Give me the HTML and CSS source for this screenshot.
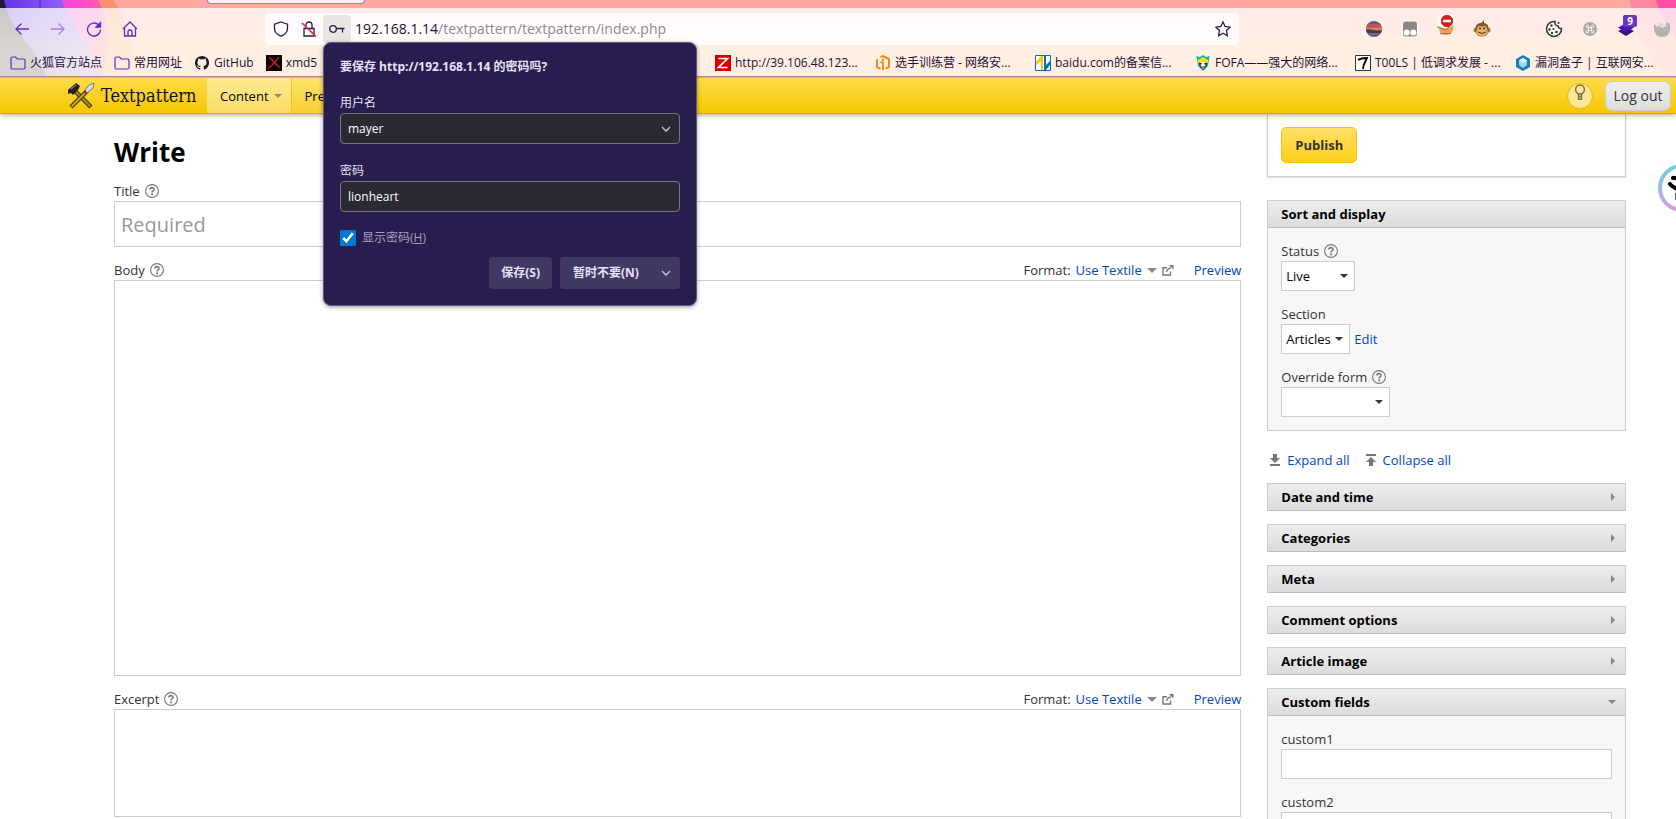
FILE: index.html
```html
<!DOCTYPE html>
<html lang="zh-CN">
<head>
<meta charset="utf-8">
<title>Write - Textpattern</title>
<link rel="stylesheet" href="styles.css">
</head>
<body>
<svg class="defs" aria-hidden="true">
  <symbol id="help" viewBox="0 0 14 14"><circle cx="7" cy="7" r="6.4" fill="none" stroke="#777" stroke-width="1.1"/><path d="M4.9 5.5C4.9 2.9 9.2 3 9.1 5.4 9 6.9 7.1 6.8 7.1 8.4" fill="none" stroke="#777" stroke-width="1.6"/><rect x="6.2" y="9.5" width="1.8" height="1.8" fill="#777"/></symbol>
  <symbol id="external" viewBox="0 0 12 11"><path d="M5 2.7H1V10H8.5V6.5M4.5 7C5 4.500 6.500 3.300 9 3" fill="none" stroke="#777" stroke-width="1.4"/><path d="M7 0H11.500V4.500Z" fill="#777"/></symbol>
  <symbol id="chevron" viewBox="0 0 10 6"><path d="M1 1L5 5L9 1" fill="none" stroke="currentColor" stroke-width="1.3"/></symbol>
  <symbol id="folder" viewBox="0 0 16 16"><path d="M1 12.500V3.500C1 2.500 1.600 2 2.500 2H5.500L7.300 4H13.500C14.400 4 15 4.600 15 5.500V12.500C15 13.400 14.400 14 13.500 14H2.500C1.600 14 1 13.400 1 12.500Z" fill="none" stroke="#5b2fc4" stroke-width="1.200"/></symbol>
</svg>

<div class="browser">
  <svg class="theme" viewBox="0 0 360 77" width="360" height="77" aria-hidden="true">
    <defs>
      <linearGradient id="sky" x1="0" x2="1"><stop offset="0" stop-color="#6032e6"/><stop offset=".6" stop-color="#8a5cf6"/><stop offset="1" stop-color="#b070ff"/></linearGradient>
      <linearGradient id="pink" x1="0" x2="1"><stop offset="0" stop-color="#c05cf4"/><stop offset=".7" stop-color="#ff45d0"/><stop offset="1" stop-color="#ff5fa8"/></linearGradient>
    </defs>
    <path d="M0 0H113C130 25 136 50 130 77H0Z" fill="#ff9070"/>
    <path d="M0 0H98C110 22 112 50 101 77H0Z" fill="url(#pink)"/>
    <path d="M0 0H62C69 25 95 45 100 77H0Z" fill="url(#sky)"/>
    <path d="M0 0H4C12 36 34 42 46 77H0Z" fill="#241438"/>
    <path d="M40 0V8" stroke="#4826a8"/>
  </svg>
  <svg class="theme theme-right" viewBox="0 0 48 77" width="48" height="77" aria-hidden="true">
    <path d="M2 0C6 30 16 58 44 77H48V0Z" fill="#ff86a0"/><path d="M28 0H48V40C38 25 32 15 28 0Z" fill="#ff4fa8"/>
  </svg>
  <div class="tab-strip"><div class="active-tab"></div></div>
  <div class="toolbars">
    <div class="nav-bar">
      <button class="tool" aria-label="后退"><svg viewBox="0 0 16 16"><path d="M15 8H2M7.500 2.500L2 8L7.500 13.500"/></svg></button>
      <button class="tool faded" aria-label="前进"><svg viewBox="0 0 16 16"><path d="M1 8H14M8.500 2.500L14 8L8.500 13.500"/></svg></button>
      <button class="tool" aria-label="刷新"><svg viewBox="0 0 16 16"><path d="M14.500 8.500A6.500 6.500 0 1 1 12.500 3.800"/><path class="solid" d="M14.500 1.500V6H10Z"/></svg></button>
      <button class="tool" aria-label="主页"><svg viewBox="0 0 16 16"><path d="M1 8L8 1L15 8M2.500 7V15H13.500V7M6 15V10.500C6 8.500 10 8.500 10 10.500V15"/></svg></button>
      <div class="url-bar">
        <button class="tool dark" aria-label="跟踪保护"><svg viewBox="0 0 16 16"><path d="M8 1L14.500 3.200V7C14.500 11 11.500 14 8 15.200C4.500 14 1.500 11 1.500 7V3.200Z"/></svg></button>
        <button class="tool dark" aria-label="不安全连接"><svg viewBox="0 0 16 16"><path d="M3 7.500H13V15H3ZM5 7.500V4C5 0 11 0 11 4V7.500"/><path class="slash" d="M1 2L15 15.500"/></svg></button>
        <button class="tool dark key" aria-label="密码"><svg viewBox="0 0 16 16"><circle cx="4" cy="8" r="3.300"/><path d="M7.300 7.500H15.500M13.500 7.500V11.500"/></svg></button>
        <div class="url" role="textbox" aria-label="地址">192.168.1.14<span>/textpattern/textpattern/index.php</span></div>
        <button class="tool dark star" aria-label="收藏"><svg viewBox="0 0 16 16"><path d="M8 1L10.100 5.500L15 6.200L11.500 9.600L12.400 14.700L8 12.300L3.600 14.700L4.500 9.600L1 6.200L5.900 5.500Z"/></svg></button>
      </div>
      <div class="extensions">
        <svg viewBox="0 0 20 20"><circle cx="10" cy="10" r="8" fill="#526083"/><path d="M3.500 5H16.500L17.700 8.500H2.300Z" fill="#b8525b"/><path d="M2 8.500H18V11.500H2Z" fill="#ef7c4d"/><path d="M2 10.500C7 9 12 13 18 11L17 14H3Z" fill="#323d68"/><path d="M5 15H15" stroke="#c95b57"/></svg>
        <svg viewBox="0 0 20 20"><rect x="2.500" y="2" width="15" height="16" rx="3" fill="#8c8886" stroke="#fff"/><circle cx="6.700" cy="13.500" r="3" fill="#fff"/><circle cx="13.300" cy="13.500" r="3" fill="#fff"/></svg>
        <svg class="tall" viewBox="0 0 20 24"><rect x="2" y="0" width="17" height="11" rx="2" fill="#fff"/><path d="M3 11C6 14 14 15 17 9C19 17 14 20 10 20C5 20 3 17 3 11Z" fill="#f6a04c"/><path d="M1 12L10 15L14 11M4 18.500H15" stroke="#8d7864" fill="none"/><circle cx="11" cy="6" r="5.800" fill="#d91e0b" stroke="#5c1a12" stroke-width=".6"/><path d="M7 6H15" stroke="#fff" stroke-width="2.500"/></svg>
        <svg viewBox="0 0 20 20"><circle cx="4" cy="11" r="2.500" fill="#b87431"/><circle cx="16" cy="11" r="2.500" fill="#b87431"/><path d="M9 4L12 1L12 4C17 5 17 9 16.500 13C15 19 5 19 3.500 13C3 8 4 4 9 4Z" fill="#8a5523"/><path d="M5 10C6 6 9 7 10 8C11 7 14 6 15 10L16 14C14 18 6 18 4 14Z" fill="#e3b36e"/><circle cx="8" cy="9.500" r="1" fill="#174b22"/><circle cx="12" cy="9.500" r="1" fill="#174b22"/><path d="M6 13Q10 16 14 13" stroke="#6b2c12" fill="none"/></svg>
        <i></i>
        <svg viewBox="0 0 20 20"><path d="M11 2.500A7.500 7.500 0 1 0 17.500 9.500C15 10 14 8.500 14.300 7C12 7 10.500 5.500 11 2.500Z" fill="#fff" stroke="#333" stroke-width="1.500"/><g fill="#333"><circle cx="7.500" cy="6.500" r="1.200"/><circle cx="5.500" cy="10.500" r="1.200"/><circle cx="9.500" cy="10" r="1.100"/><circle cx="8" cy="14" r="1.200"/><circle cx="12.500" cy="13" r="1.300"/><circle cx="14.500" cy="4" r="1"/></g></svg>
        <svg viewBox="0 0 20 20"><circle cx="10" cy="10" r="7" fill="#aaa"/><path d="M8.500 8.500H11.500V11.500H8.500ZM8.500 8.500H7.300A1.200 1.200 0 1 1 8.500 7.300ZM11.500 8.500V7.300A1.200 1.200 0 1 1 12.700 8.500ZM11.500 11.500H12.700A1.200 1.200 0 1 1 11.500 12.700ZM8.500 11.500V12.700A1.200 1.200 0 1 1 7.300 11.500Z" fill="none" stroke="#fff" stroke-width=".9"/></svg>
        <span class="badged"><svg viewBox="0 0 20 20"><path d="M2 12L10 8L18 12L10 17Z" fill="#301079"/><path d="M2 8.500L10 4.500L18 8.500L10 13.500Z" fill="#5013b3"/></svg><b>9</b></span>
        <svg viewBox="0 0 20 20"><path d="M2 5C4 7 5 8 6 8L8 4L12 6L16 3L18 6C19 15 15 18 10 18C5 18 1 14 2 5Z" fill="#b5b1af"/><path d="M5 4L8 3L9 6L13 4L15 7L10 9Z" fill="#e5e2e0"/></svg>
      </div>
    </div>
    <nav class="bookmarks" aria-label="书签">
      <div class="bookmark-group">
        <a href="#"><svg><use href="#folder"/></svg>火狐官方站点</a>
        <a href="#"><svg><use href="#folder"/></svg>常用网址</a>
        <a href="#"><svg viewBox="0 0 16 16"><path d="M8 1A7 7 0 0 0 5.600 14.600C6 14.700 6.200 14.500 6.200 14.200V12.800C4.200 13.200 3.800 12 3.800 12C3.400 11.200 3 10.900 3 10.900C2.300 10.400 4 10.300 4.600 11.500C5.200 12.300 5.900 12.100 6.300 11.900L6.700 11C4.500 10.800 3.400 9.700 3.400 7.500C3.400 6.700 3.700 6 4.200 5.500C4 5 4 4.300 4.300 3.600C5 3.600 5.700 4 6.300 4.400C7.400 4.100 8.600 4.100 9.700 4.400C10.300 4 11 3.600 11.700 3.600C12 4.300 12 5 11.800 5.500C12.300 6 12.600 6.700 12.600 7.500C12.600 9.700 11.500 10.800 9.300 11C9.700 11.400 9.800 11.900 9.800 12.600V14.200C9.800 14.500 10 14.700 10.400 14.600A7 7 0 0 0 8 1Z" fill="#1d1d24"/></svg>GitHub</a>
        <a href="#"><svg viewBox="0 0 16 16"><path d="M0 0H16V16H0Z" fill="#000"/><path d="M3 2L8 7L14 13M13 2L10 6L6 10L2 14M8 6L11 11M5 4L7 7" stroke="#d4141c" stroke-width="1.300" fill="none"/></svg>xmd5</a>
      </div>
      <div class="bookmark-group sites">
        <a href="#"><svg viewBox="0 0 16 16"><path d="M0 0H16V16H0Z" fill="#d60000"/><path d="M3.500 3.500H12.500L3.500 12.500H12.500" fill="none" stroke="#fff" stroke-width="1.700"/></svg>http://39.106.48.123...</a>
        <a href="#"><svg viewBox="0 0 16 16"><path d="M5.500 2.200L8 1L14 4.200V11.800L10.500 13.800M5.500 13.800L2 11.800V4.200M8 7V15M5.500 7.200H8" fill="none" stroke="#f08a1c" stroke-width="2"/><circle cx="8" cy="4.700" r="1.200" fill="#f08a1c"/></svg>选手训练营 - 网络安...</a>
        <a href="#"><svg viewBox="0 0 16 16"><path d="M.5.5H15.500V15.500H.5Z" fill="#fff" stroke="#0870bd"/><path d="M1 7L6 1H8V15H6V6L1 10Z" fill="#fac800"/><path d="M9 1H11V10L15 6V10L11 15H9Z" fill="#0870bd"/></svg>baidu.com的备案信...</a>
        <a href="#"><svg viewBox="0 0 16 16"><path d="M2 4L1 1L5 2L8 0L11 2L15 1L14 4L13 11L8 16L3 11Z" fill="#16b0a8"/><path d="M3 5L8 2L13 5L13 8H3Z" fill="#f6dc22"/><path d="M4 8H12L11 12L8 15L5 12Z" fill="#333"/><path d="M5.500 7H10.500L10 12L8 14L6 12Z" fill="#fff"/><path d="M4 8L7 9M12 8L9 9M6 12H10" stroke="#222"/></svg>FOFA——强大的网络...</a>
        <a href="#"><svg viewBox="0 0 16 16"><path d="M.5.5H15.500V15.500H.5Z" fill="#fff" stroke="#333"/><path d="M3 5C6 3 8 3 12 3C11 6 8 9 8 14" fill="none" stroke="#000" stroke-width="1.800"/></svg>T00LS | 低调求发展 - ...</a>
        <a href="#"><svg viewBox="0 0 16 16"><path d="M8 0L15 4V12L8 16L1 12V4Z" fill="#1681bd"/><path d="M8 3L12 5.500V10L8 13L4 10V5.500Z" fill="#9cd9f2"/><path d="M4 5.500L8 8L12 5.500L8 3Z" fill="#e8f8ff"/></svg>漏洞盒子 | 互联网安...</a>
      </div>
    </nav>
  </div>

  <section class="doorhanger" aria-label="保存密码">
    <h2>要保存 http://192.168.1.14 的密码吗?</h2>
    <label for="user">用户名</label>
    <div class="field"><input id="user" type="text" value="mayer"><svg class="chev"><use href="#chevron"/></svg></div>
    <label for="pass">密码</label>
    <div class="field"><input id="pass" type="text" value="lionheart"></div>
    <div class="show"><input id="show" type="checkbox" checked><label for="show">显示密码(<u>H</u>)</label></div>
    <div class="actions">
      <button>保存(S)</button>
      <div class="split"><button>暂时不要(N)</button><button class="more" aria-label="更多"><svg class="chev"><use href="#chevron"/></svg></button></div>
    </div>
  </section>
</div>

<header class="txp-header">
  <a class="brand" href="#"><svg viewBox="0 0 28 28"><path d="M9 10L24 25" stroke="#4c3a08" stroke-width="4.500"/><path d="M9 10L23.500 24.500" stroke="#a98d33" stroke-width="2"/><path d="M20 9L4 25" stroke="#4c3a08" stroke-width="4.500"/><path d="M18 11L4.500 24.500" stroke="#c7a640" stroke-width="2"/><path d="M1 8L9 1L13 4L11 8L6 13L4 11L1 12Z" fill="#222"/><path d="M4 7L9 3" stroke="#777" stroke-width="1.500"/><path d="M18 8L22 3L27 1L26 6L20 11Z" fill="#ddd" stroke="#777"/></svg>Textpattern</a>
  <nav class="menu"><a class="current" href="#">Content <i class="caret"></i></a><a href="#">Pre</a></nav>
  <button class="lamp" aria-label="Toggle theme"><svg viewBox="0 0 12 18"><circle cx="6" cy="5.500" r="4.400"/><path d="M4.500 9.800V15.200H7.500V9.800M4.500 12.500H7.500"/></svg></button>
  <button class="logout">Log out</button>
</header>

<main class="page">
  <div class="editor">
    <h1>Write</h1>
    <div class="row"><label for="title">Title</label><svg class="help"><use href="#help"/></svg></div>
    <input class="box title" id="title" type="text" placeholder="Required">
    <div class="row"><label for="body">Body</label><svg class="help"><use href="#help"/></svg>
      <div class="format">Format: <a href="#">Use Textile</a><i class="caret"></i><svg class="external"><use href="#external"/></svg><a class="preview" href="#">Preview</a></div></div>
    <textarea class="box body" id="body"></textarea>
    <div class="row"><label for="excerpt">Excerpt</label><svg class="help"><use href="#help"/></svg>
      <div class="format">Format: <a href="#">Use Textile</a><i class="caret"></i><svg class="external"><use href="#external"/></svg><a class="preview" href="#">Preview</a></div></div>
    <textarea class="box excerpt" id="excerpt"></textarea>
  </div>
  <aside class="side">
    <div class="publish-box"><button class="publish">Publish</button></div>
    <section class="panel sort">
      <h3>Sort and display</h3>
      <div class="panel-body">
        <div class="row"><label for="status">Status</label><svg class="help"><use href="#help"/></svg></div>
        <div class="pick status"><select id="status"><option>Live</option></select></div>
        <div class="row"><label for="section">Section</label></div>
        <div class="inline"><div class="pick section"><select id="section"><option>Articles</option></select></div><a href="#">Edit</a></div>
        <div class="row"><label for="form">Override form</label><svg class="help"><use href="#help"/></svg></div>
        <div class="pick form"><select id="form"><option></option></select></div>
      </div>
    </section>
    <div class="toggles">
      <a href="#"><svg viewBox="0 0 10 12"><path d="M3 0H7V4H10L5 9L0 4H3ZM0 10H10V12H0Z"/></svg>Expand all</a>
      <a href="#"><svg viewBox="0 0 10 12"><path d="M0 0H10V2H0ZM5 3L10 8H7V12H3V8H0Z"/></svg>Collapse all</a>
    </div>
    <section class="panel"><h3>Date and time<i class="closed"></i></h3></section>
    <section class="panel"><h3>Categories<i class="closed"></i></h3></section>
    <section class="panel"><h3>Meta<i class="closed"></i></h3></section>
    <section class="panel"><h3>Comment options<i class="closed"></i></h3></section>
    <section class="panel"><h3>Article image<i class="closed"></i></h3></section>
    <section class="panel"><h3>Custom fields<i class="caret"></i></h3>
      <div class="panel-body">
        <div class="row"><label for="c1">custom1</label></div><input class="box" id="c1" type="text">
        <div class="row"><label for="c2">custom2</label></div><input class="box" id="c2" type="text">
      </div>
    </section>
  </aside>
</main>
<svg class="floater" viewBox="0 0 48 48" aria-hidden="true"><defs><linearGradient id="ring" x1="0" y1="0" x2="0" y2="1"><stop offset=".2" stop-color="#7ec8de"/><stop offset=".65" stop-color="#a9b4ea"/><stop offset="1" stop-color="#dc9ad8"/></linearGradient></defs><circle cx="24" cy="24" r="22" fill="#fff" stroke="url(#ring)" stroke-width="4"/><path d="M15 14C18 13 20 16 26 18M12 20C14 23 18 24 24 28" stroke="#000" stroke-width="4" stroke-linecap="round" fill="none"/><path d="M17.500 29V36" stroke="#555"/></svg>
</body>
</html>
```
FILE: styles.css
```css
* { box-sizing: border-box; }
body {
  margin: 0;
  height: 100vh;
  display: flex;
  flex-direction: column;
  overflow: hidden;
  position: relative;
  background: #fff;
  color: #333;
  font: 13px/20px "Open Sans", "Noto Sans CJK SC", sans-serif;
}
button, input, select, textarea { font: inherit; color: inherit; margin: 0; }
button { padding: 0; border: 0; background: none; }
a { color: #04c; text-decoration: none; }
h1, h2, h3 { margin: 0; }
.defs { position: absolute; width: 0; height: 0; }

/* Browser chrome */
.browser { position: relative; z-index: 3; background: #ffa8a2; }
.theme { position: absolute; left: 0; top: 0; }
.theme-right { left: auto; right: 0; }
.tab-strip { position: relative; height: 8px; }
.active-tab {
  width: 158px;
  height: 4px;
  margin-left: 207px;
  background: #fff0ea;
  border: solid #a06cf8;
  border-width: 0 1px 1px;
  border-radius: 0 0 4px 4px;
}
.toolbars {
  position: relative;
  background: linear-gradient(rgba(255, 255, 255, .76), rgba(255, 255, 240, .82) 40px);
  border-bottom: 1px solid #b38b8b;
  overflow: hidden;
}
.nav-bar { display: flex; align-items: center; height: 41px; padding-left: 4px; margin-right: -4px; }
.tool { width: 36px; height: 28px; display: grid; place-items: center; color: #5b2fc4; }
.tool svg { width: 16px; height: 16px; fill: none; stroke: currentColor; stroke-width: 1.3; }
.tool .solid { fill: currentColor; }
.tool .slash { stroke: #e9214c; stroke-width: 1.6; }
.tool.faded { opacity: .5; }
.tool.dark { width: 28px; color: #2b1b4c; }
.key { background: #e8e5e3; border-radius: 4px; }
.url-bar {
  flex: 1;
  display: flex;
  align-items: center;
  height: 32px;
  margin-left: 117px;
  padding: 0 2px;
  background: rgba(255, 255, 255, .8);
  border-radius: 4px;
}
.url { flex: 1; padding-left: 4px; font-size: 14px; color: #1e1038; }
.url span { color: #8f869c; }
.extensions { display: flex; align-items: center; margin-left: 117px; }
.extensions > * { width: 36px; height: 20px; flex: none; }
.extensions > .tall { height: 24px; margin-top: -4px; }
.badged { position: relative; }
.badged svg { width: 36px; height: 20px; }
.badged b {
  position: absolute;
  right: 7px;
  top: -4px;
  width: 14px;
  background: #6536c4;
  border-radius: 2px;
  color: #fff;
  font-size: 10px;
  line-height: 12px;
  text-align: center;
}
.bookmarks { display: flex; justify-content: space-between; height: 27px; padding: 0 1px 0 10px; }
.bookmark-group { display: flex; align-items: center; gap: 12px; }
.bookmarks a {
  display: flex;
  align-items: center;
  gap: 4px;
  color: #1e1038;
  font-size: 12px;
  white-space: nowrap;
}
.bookmarks svg { width: 16px; height: 16px; flex: none; }
.sites { gap: 0; }
.sites a { width: 160px; }

/* Save-password panel */
.doorhanger {
  position: absolute;
  left: 323px;
  top: 42px;
  width: 374px;
  padding: 14px 16px 16px;
  background: #291d4f;
  border: 1px solid #625884;
  border-radius: 8px;
  box-shadow: 0 1px 4px rgba(0, 0, 0, .4);
  color: #e6e0f8;
  font-size: 12px;
}
.doorhanger h2 { font-size: 12px; line-height: 20px; margin-bottom: 15px; }
.doorhanger > label { display: block; line-height: 21px; }
.field { position: relative; margin-bottom: 16px; }
.field input {
  display: block;
  width: 100%;
  height: 31px;
  padding: 0 7px;
  background: #2b2a33;
  border: 1px solid #77767f;
  border-radius: 4px;
  color: #fbfbfe;
}
.chev { width: 10px; height: 6px; color: #cfc8e0; }
.field .chev { position: absolute; right: 9px; top: 13px; }
.show { display: flex; align-items: center; gap: 6px; color: #a79dc0; }
.show input { width: 16px; height: 16px; accent-color: #0078d7; }
.actions { display: flex; justify-content: flex-end; gap: 8px; margin-top: 9px; }
.actions button { height: 32px; padding: 0 12px; background: #423864; border-radius: 4px; font-weight: 700; }
.split { display: flex; width: 120px; background: #423864; border-radius: 4px; }
.split button { flex: 1; padding: 0; white-space: nowrap; }
.split .more { flex: none; width: 28px; display: grid; place-items: center; }

/* Textpattern header */
.txp-header {
  position: relative;
  z-index: 2;
  flex: none;
  display: flex;
  align-items: center;
  height: 37px;
  padding: 0 5px 0 67px;
  background: linear-gradient(#ffdc48, #f7c600);
  border-top: 1px solid #eabf13;
  border-bottom: 1px solid #d9a900;
  box-shadow: 0 1px 5px rgba(0, 0, 0, .35);
}
.brand {
  display: flex;
  align-items: center;
  gap: 6px;
  width: 140px;
  color: #111;
  font: 18px/24px "DejaVu Serif Condensed", "DejaVu Serif", serif;
}
.brand svg { width: 28px; height: 28px; flex: none; }
.menu { display: flex; flex: 1; align-self: stretch; }
.menu a {
  display: flex;
  align-items: center;
  gap: 5px;
  padding: 0 9px 0 13px;
  background: rgba(255, 255, 255, .2);
  border-right: 1px solid #f0c419;
  color: #000;
}
.menu .current { background: rgba(255, 255, 255, .4); }
.caret { border: 4px solid transparent; border-top-color: #888; border-bottom: 0; }
.lamp {
  width: 26px;
  height: 26px;
  margin-right: 12px;
  display: flex;
  justify-content: center;
  background: #ffe894;
  border: 1px solid #dfb82b;
  border-radius: 50%;
}
.lamp svg { width: 12px; height: 18px; fill: none; stroke: #777052; stroke-width: 1.5; }
.logout {
  width: 66px;
  height: 30px;
  background: linear-gradient(#eee, #ddd);
  border: 1px solid #ccc;
  border-radius: 7px;
  font-size: 14px;
}

/* Write page */
.page {
  flex: 1;
  min-height: 0;
  overflow: hidden;
  display: grid;
  grid-template-columns: 22fr 7fr;
  align-items: start;
  gap: 26px;
  padding: 0 50px 0 114px;
}
.editor h1 { padding: 22px 0 13px; color: #000; font-size: 26px; line-height: 32px; }
.row { display: flex; align-items: center; height: 20px; gap: 5px; }
.help { width: 14px; height: 14px; }
.box {
  display: block;
  width: 100%;
  height: 30px;
  padding: 0 6px;
  background: #fff;
  border: 1px solid #ccc;
  border-radius: 0;
  resize: none;
}
.title { height: 46px; font-size: 20px; }
.title::placeholder { color: #999; opacity: 1; }
.body { height: 396px; }
.excerpt { height: 108px; }
.box + .row { margin-top: 13px; }
.format { display: flex; align-items: center; gap: 5px; margin-left: auto; }
.format .caret { border-width: 5px 5px 0; }
.external { width: 12px; height: 11px; }
.preview { margin-left: 15px; }

.publish-box {
  padding: 13px;
  margin-bottom: 23px;
  border: 1px solid #ccc;
  border-top: 0;
  box-shadow: 0 1px 2px rgba(0, 0, 0, .15);
}
.publish {
  width: 76px;
  height: 36px;
  background: linear-gradient(#ffe066, #ffcf1c);
  border: 1px solid #f5c400;
  border-radius: 5px;
  font-weight: 700;
}
.panel { margin-bottom: 13px; border: 1px solid #ccc; background: #f7f7f7; }
.panel h3 {
  display: flex;
  align-items: center;
  justify-content: space-between;
  height: 26px;
  padding: 0 9px 0 13px;
  background: linear-gradient(#ededed, #dcdcdc);
  box-shadow: 0 1px #bbb;
  color: #000;
  font-size: 13px;
}
.closed { border: 4px solid transparent; border-left-color: #888; border-right: 0; margin-right: 1px; }
.panel-body { padding: 14px 13px 13px; }
.pick { position: relative; }
.pick select {
  display: block;
  width: 100%;
  height: 30px;
  padding: 0 4px;
  appearance: none;
  background: #fff;
  border: 1px solid #ccc;
  border-radius: 0;
  color: #000;
}
.pick::after {
  content: "";
  position: absolute;
  right: 7px;
  top: 13px;
  border: 4px solid transparent;
  border-top-color: #333;
  border-bottom: 0;
}
.status { width: 74px; }
.section { width: 69px; }
.form { width: 109px; }
.inline { display: flex; align-items: center; gap: 4px; }
.pick + .row, .inline + .row { margin-top: 13px; }
.toggles { display: flex; gap: 16px; padding: 6px 3px 13px; }
.toggles a { display: flex; align-items: center; gap: 7px; }
.toggles svg { width: 10px; height: 12px; fill: #777; }
.floater { position: absolute; left: calc(100% - 18px); top: 164px; width: 48px; height: 48px; }
```
